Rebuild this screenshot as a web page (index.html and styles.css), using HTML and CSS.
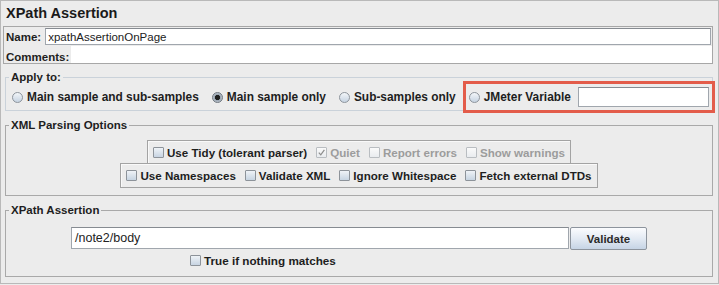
FILE: index.html
```html
<!DOCTYPE html>
<html lang="en">
<head>
  <meta charset="UTF-8">
  <title>XPath Assertion</title>
  <link rel="stylesheet" href="styles.css">
</head>
<body>
  <div class="window">
    <h1 class="title">XPath Assertion</h1>

    <div class="name-box">
      <div class="name-row name-row--name">
        <span class="field-label">Name:</span>
        <div class="text-field name-field">xpathAssertionOnPage</div>
      </div>
      <div class="name-row name-row--comments">
        <span class="field-label">Comments:</span>
        <div class="comments-field"></div>
      </div>
    </div>

    <fieldset class="group group--apply">
      <legend>Apply to:</legend>
      <div class="radio-row">
        <label class="radio"><span class="radio-dot"></span>Main sample and sub-samples</label>
        <label class="radio"><span class="radio-dot radio-dot--on"></span>Main sample only</label>
        <label class="radio"><span class="radio-dot"></span>Sub-samples only</label>
        <div class="highlight">
          <label class="radio"><span class="radio-dot"></span>JMeter Variable</label>
          <div class="text-field var-field"></div>
        </div>
      </div>
    </fieldset>

    <fieldset class="group group--xml">
      <legend>XML Parsing Options</legend>
      <div class="panels">
        <div class="panel panel--tidy">
          <label class="check"><span class="check-box"></span>Use Tidy (tolerant parser)</label>
          <label class="check check--off"><span class="check-box">
            <svg width="9" height="9" viewBox="0 0 10 10"><path d="M2 5.2 L4.2 7.6 L8.2 2.2" fill="none" stroke="#8e8e8e" stroke-width="1.4"/></svg>
          </span>Quiet</label>
          <label class="check check--off"><span class="check-box"></span>Report errors</label>
          <label class="check check--off"><span class="check-box"></span>Show warnings</label>
        </div>
        <div class="panel panel--opts">
          <label class="check"><span class="check-box"></span>Use Namespaces</label>
          <label class="check"><span class="check-box"></span>Validate XML</label>
          <label class="check"><span class="check-box"></span>Ignore Whitespace</label>
          <label class="check"><span class="check-box"></span>Fetch external DTDs</label>
        </div>
      </div>
    </fieldset>

    <fieldset class="group group--xpath">
      <legend>XPath Assertion</legend>
      <div class="xpath-row">
        <div class="text-field xpath-field">/note2/body</div>
        <button class="button">Validate</button>
      </div>
      <div class="match-row">
        <label class="check"><span class="check-box"></span>True if nothing matches</label>
      </div>
    </fieldset>
  </div>
</body>
</html>
```

FILE: styles.css
```css
* {
  margin: 0;
  padding: 0;
  box-sizing: border-box;
}

body {
  background: #ececec;
  font-family: "Liberation Sans", Arial, sans-serif;
  font-size: 11.5px;
  color: #1e1e1e;
}

.window {
  width: 719px;
  height: 284px;
  border: 1px solid #b9b9b9;
  background: #ececec;
}

.title {
  font-size: 14.5px;
  font-weight: bold;
  line-height: 25px;
  padding-left: 5px;
  color: #1a1a1a;
}

/* name / comments */
.name-box {
  margin: 0 5px 0 2px;
  border: 1px solid #a7a7a7;
  padding: 1px 0 0 1px;
}

.name-row {
  display: flex;
  align-items: center;
  font-weight: bold;
}

.name-row--name {
  height: 17px;
}

.name-row--comments {
  height: 18px;
  align-items: flex-end;
}

.field-label {
  padding-left: 1px;
}

.text-field {
  background: #fff;
  border: 1px solid #a0a6ad;
  border-top-color: #868b91;
  font-weight: normal;
  padding-left: 3px;
  display: flex;
  align-items: center;
  color: #222;
}

.name-field {
  flex: 1;
  height: 17px;
  margin: 0 1px 0 4px;
  padding-left: 2px;
}

.comments-field {
  flex: 1;
  height: 17px;
  margin-left: 2px;
  background: #fff;
}

/* titled groups */
.group {
  margin: 7px 5px 0 4px;
  border: 1px solid #a9a9a9;
  min-width: 0;
}

.group legend {
  margin-left: 3px;
  padding: 0 2px;
  font-weight: bold;
  line-height: 14px;
}

.group--apply {
  margin-top: 6px;
  border-color: #cad2da;
}

.radio-row {
  display: flex;
  align-items: center;
  height: 20px;
  margin: 3px 0 3px 6px;
  font-size: 11.9px;
}

.radio {
  display: flex;
  align-items: center;
  gap: 4px;
  font-weight: bold;
  margin-right: 13px;
  white-space: nowrap;
}

.radio-dot {
  width: 11px;
  height: 11px;
  border-radius: 50%;
  border: 1px solid #8d949c;
  background: linear-gradient(#f3f6f9, #c6d3e1);
}

.radio-dot--on {
  background: radial-gradient(circle, #1f1f1f 0 2.4px, #9aa5b1 2.9px, #d7dee6 100%);
  border-color: #6f767e;
}

.highlight {
  flex: 1;
  display: flex;
  align-items: center;
  height: 32px;
  margin: 0 -3px 0 -6px;
  padding: 0 3px;
  border: 3px solid #e35c4a;
}

.highlight .radio {
  margin-right: 7px;
}

.var-field {
  flex: 1;
  height: 20px;
}

/* xml parsing options */
.panels {
  display: flex;
  flex-direction: column;
  align-items: center;
  padding: 8px 0 7px;
}

.panel {
  display: flex;
  align-items: center;
  border: 1px solid #a3a3a3;
  box-shadow: inset 1px 1px 0 #f9f9f9;
  padding: 0 5px;
  font-size: 11.6px;
}

.panel--tidy {
  height: 24px;
}

.panel--opts {
  height: 25px;
  margin-top: -1px;
}

.check {
  display: flex;
  align-items: center;
  gap: 3px;
  font-weight: bold;
  white-space: nowrap;
}

.panel .check + .check {
  margin-left: 9px;
}

.check-box {
  width: 11px;
  height: 11px;
  border: 1px solid #8d939a;
  border-radius: 1px;
  background: linear-gradient(#eff3f7, #c7d4e2);
  display: flex;
  align-items: center;
  justify-content: center;
}

.check--off {
  color: #9c9c9c;
}

.check--off .check-box {
  border-color: #b9bdc1;
  background: linear-gradient(#fafafa, #e9ecef);
}

/* xpath */
.xpath-row {
  display: flex;
  justify-content: center;
  align-items: flex-start;
  padding-top: 10px;
}

.xpath-field {
  width: 498px;
  height: 22px;
  font-size: 12.5px;
}

.button {
  width: 77px;
  height: 23px;
  margin-left: 1px;
  font-family: inherit;
  font-size: 11.5px;
  font-weight: bold;
  color: #2a2a2a;
  border: 1px solid #8d949d;
  border-radius: 2px;
  background: linear-gradient(#fbfcfe, #e3eaf3 50%, #c6d4e5);
}

.match-row {
  display: flex;
  height: 16px;
  margin: 2px 0 8px 184px;
  align-items: center;
  font-size: 11.7px;
}
```
